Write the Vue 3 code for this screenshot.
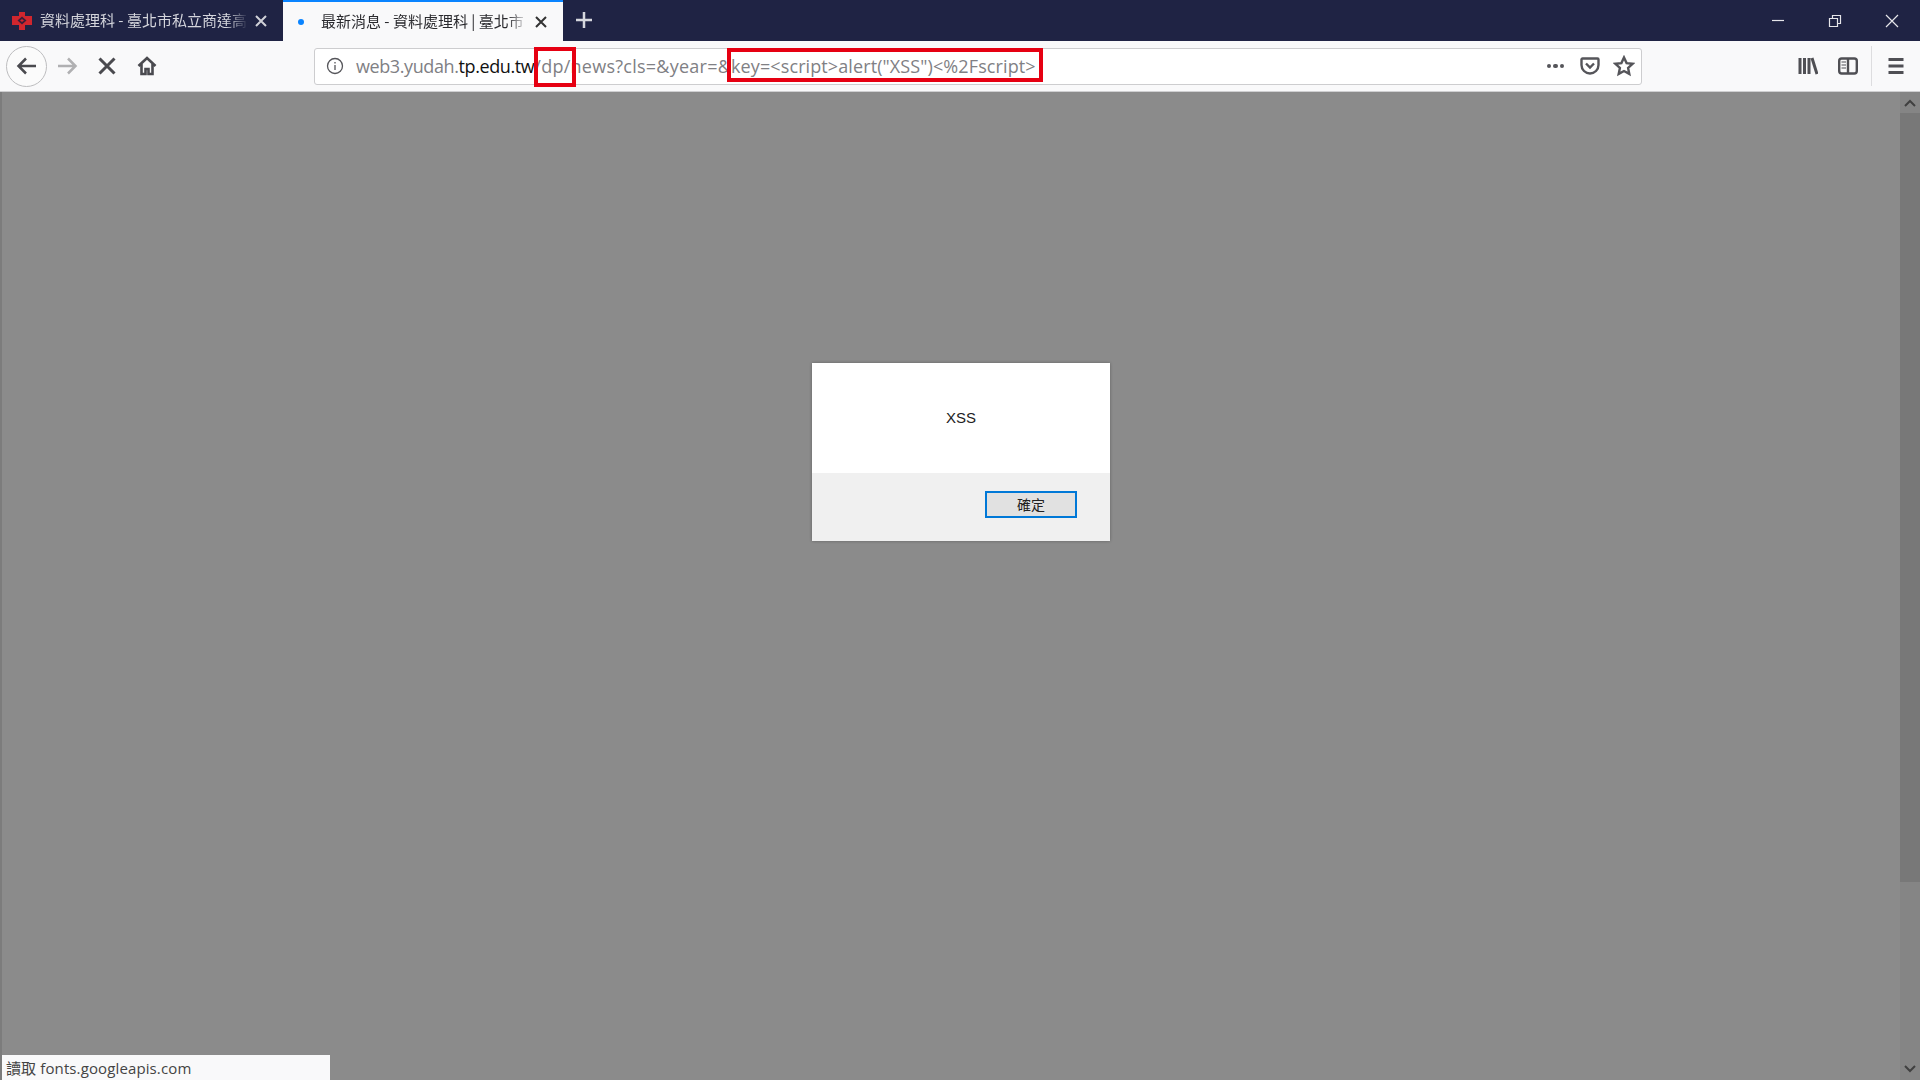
<template>
  <div class="window">
    <div class="tabbar">
      <div class="tab">
        <svg class="favicon" width="20" height="18" viewBox="0 0 20 18">
          <path class="red" d="M7 0h6v4h7v9h-7v5H7v-5H0V4h7z" />
          <path class="hole" d="M10 4.500L14.500 8.500 10 12.500 5.500 8.500z" />
          <path class="red" d="M10 7L12 8.500 10 10 8 8.500z" />
        </svg>
        <span class="tab-title">資料處理科 - 臺北市私立商達高</span>
        <svg class="tab-close" width="14" height="14" viewBox="0 0 14 14"><path d="M2 2l10 10M12 2L2 12" /></svg>
      </div>
      <div class="tab active">
        <span class="dot"></span>
        <span class="tab-title">最新消息 - 資料處理科 | 臺北市</span>
        <svg class="tab-close" width="14" height="14" viewBox="0 0 14 14"><path d="M2 2l10 10M12 2L2 12" /></svg>
      </div>
      <svg class="plus" width="18" height="18" viewBox="0 0 18 18"><path d="M9 1v16M1 9h16" /></svg>
      <div class="win-btns">
        <svg width="14" height="14" viewBox="0 0 14 14"><path d="M1 6.500h12" /></svg>
        <svg width="14" height="14" viewBox="0 0 14 14"><path d="M1.500 4.500h8v8h-8zM4.500 4.500v-3h8v8h-3" /></svg>
        <svg width="14" height="14" viewBox="0 0 14 14"><path d="M1 1l12 12M13 1L1 13" /></svg>
      </div>
    </div>

    <div class="toolbar">
      <button class="back">
        <svg width="22" height="22" viewBox="0 0 22 22"><path d="M20 11H3M10 3.500L2.500 11l7.500 7.500" /></svg>
      </button>
      <svg class="nav forward" width="22" height="22" viewBox="0 0 22 22"><path d="M2 11h17M12 3.500l7.500 7.500-7.500 7.500" /></svg>
      <svg class="nav stop" width="20" height="20" viewBox="0 0 20 20"><path d="M2.500 2.500l15 15M17.500 2.500l-15 15" /></svg>
      <svg class="nav home" width="20" height="20" viewBox="0 0 20 20"><path d="M1.500 10L10 2l8.500 8M4.500 8v10h4v-5h3v5h4V8" /></svg>

      <div class="urlbar">
        <svg class="info" width="18" height="18" viewBox="0 0 18 18">
          <circle cx="9" cy="9" r="7.500" />
          <path d="M9 8v5M9 5v1.500" />
        </svg>
        <div class="url"><span class="host">web3.yudah.<b>tp.edu.tw</b></span><span class="path">/dp/news?cls=&amp;year=&amp;</span><span class="query">key=&lt;script&gt;alert("XSS")&lt;%2Fscript&gt;</span></div>
        <div class="url-actions">
          <span class="dots"><i></i><i></i><i></i></span>
          <svg width="20" height="20" viewBox="0 0 20 20"><path d="M2.500 2.500h15a1 1 0 0 1 1 1V9a8.500 8.500 0 0 1-17 0V3.500a1 1 0 0 1 1-1zM6 7.500l4 4 4-4" /></svg>
          <svg width="22" height="22" viewBox="0 0 22 22"><path d="M11 2.500l2.600 5.600 6 .7-4.500 4.100 1.200 6L11 16l-5.300 2.900 1.200-6-4.500-4.100 6-.7z" /></svg>
        </div>
      </div>

      <div class="tools">
        <svg class="library" width="20" height="20" viewBox="0 0 20 20"><path d="M2 2v16M6.500 2v16M11 2v16M14 2l5 16" /></svg>
        <svg class="sidebar" width="20" height="20" viewBox="0 0 20 20"><rect x="1.200" y="2.500" width="17.600" height="15" rx="2.500" /><path d="M10 2.500v15" /><path class="thin" d="M3.500 6H8M3.500 9H8M3.500 12H8" /></svg>
        <span class="divider"></span>
        <svg class="burger" width="20" height="20" viewBox="0 0 20 20"><path d="M2.500 3.500h15M2.500 10h15M2.500 16.500h15" /></svg>
      </div>
    </div>

    <div class="page">
      <div class="dialog">
        <div class="dialog-body">XSS</div>
        <div class="dialog-foot"><button class="ok">確定</button></div>
      </div>

      <div class="scrollbar">
        <svg width="14" height="10" viewBox="0 0 14 10"><path d="M2 8l5-5 5 5" /></svg>
        <div class="track"><div class="thumb"></div></div>
        <svg width="14" height="10" viewBox="0 0 14 10"><path d="M2 2l5 5 5-5" /></svg>
      </div>

      <div class="status">讀取 fonts.googleapis.com</div>
    </div>

    <!-- annotation boxes drawn over the screenshot -->
    <div class="mark mark-dp"></div>
    <div class="mark mark-key"></div>
  </div>
</template>

<script setup>
</script>

<style>
html, body {
  margin: 0;
  background: #8b8b8b;
}
</style>

<style scoped>
.window {
  position: relative;
  width: 1920px;
  height: 1080px;
  overflow: hidden;
  display: flex;
  flex-direction: column;
  font-family: "Open Sans", "Noto Sans CJK TC", sans-serif;
}
svg {
  fill: none;
  stroke-width: 2;
  flex: none;
}

/* tabs */
.tabbar {
  height: 41px;
  background: #1f2344;
  display: flex;
  align-items: stretch;
  flex: none;
}
.tab {
  width: 271px;
  margin-left: 12px;
  display: flex;
  align-items: center;
  color: #d4d5dc;
  font-size: 15px;
  font-family: "Noto Sans CJK TC", sans-serif;
}
.favicon {
  margin-right: 8px;
}
.favicon .red {
  fill: #d0262e;
}
.favicon .hole {
  fill: #3a1f3a;
}
.tab-title {
  flex: 1;
  min-width: 0;
  white-space: nowrap;
  padding-bottom: 2px;
  -webkit-mask-image: linear-gradient(to right, #000 90%, transparent 100%);
  mask-image: linear-gradient(to right, #000 90%, transparent 100%);
}
.tab-close {
  stroke: #d0d1d8;
  margin: 0 15px 0 6px;
}
.tab.active {
  margin-left: 0;
  width: 280px;
  background: #f9f9fa;
  border-top: 2px solid #0a84ff;
  box-sizing: border-box;
  color: #2a2a2e;
  padding-left: 15px;
}
.tab.active .tab-close {
  stroke: #333;
}
.dot {
  width: 6px;
  height: 6px;
  border-radius: 50%;
  background: #0a84ff;
  margin-right: 17px;
  flex: none;
}
.plus {
  stroke: #d6d7de;
  stroke-width: 2.500;
  margin: 11px 0 0 12px;
}
.win-btns {
  margin-left: auto;
  width: 149px;
  display: flex;
  align-items: center;
  justify-content: space-between;
  padding-right: 21px;
  box-sizing: border-box;
}
.win-btns svg {
  stroke: #e6e6ea;
  stroke-width: 1.200;
}

/* toolbar */
.toolbar {
  height: 51px;
  flex: none;
  box-sizing: border-box;
  background: #f9f9fa;
  border-bottom: 1px solid #cfcfd1;
  display: flex;
  align-items: center;
  padding-left: 6px;
}
.back {
  width: 41px;
  height: 41px;
  border-radius: 50%;
  border: 1px solid #bdbdbf;
  background: #fbfbfb;
  padding: 0;
  display: flex;
  align-items: center;
  justify-content: center;
}
.back svg {
  stroke: #4a4a4f;
  stroke-width: 2.500;
}
.nav {
  stroke: #4a4a4f;
}
.forward {
  stroke: #b0b0b2;
  stroke-width: 2.500;
  margin-left: 9px;
}
.stop {
  margin-left: 19px;
  stroke-width: 3;
}
.home {
  margin-left: 20px;
  stroke-width: 2.600;
}
.urlbar {
  margin-left: 157px;
  width: 1328px;
  height: 37px;
  flex: none;
  box-sizing: border-box;
  background: #fff;
  border: 1px solid #cdcdcf;
  border-radius: 3px;
  display: flex;
  align-items: center;
}
.info {
  stroke: #55555a;
  stroke-width: 1.300;
  margin-left: 11px;
}
.url {
  margin-left: 12px;
  font-size: 18px;
  color: #808084;
  white-space: nowrap;
}
.host {
  letter-spacing: -0.4px;
}
.path {
  letter-spacing: 0.25px;
}
.query {
  letter-spacing: 0.1px;
}
.url b {
  font-weight: 400;
  color: #111;
}
.url-actions {
  margin-left: auto;
  display: flex;
  align-items: center;
  padding-right: 6px;
}
.url-actions svg {
  stroke: #55555a;
  stroke-width: 2.400;
}
.url-actions svg:nth-child(2) {
  margin-left: 16px;
}
.url-actions svg:nth-child(3) {
  margin-left: 13px;
}
.dots {
  display: flex;
  gap: 2px;
}
.dots i {
  width: 4.500px;
  height: 4.500px;
  border-radius: 50%;
  background: #55555a;
}
.tools {
  margin-left: auto;
  display: flex;
  align-items: center;
  padding-right: 14px;
}
.tools svg {
  stroke: #4f4f54;
}
.library {
  stroke-width: 3;
  margin-right: 20px;
}
.sidebar {
  stroke-width: 2.400;
}
.sidebar .thin {
  stroke-width: 1.200;
}
.burger {
  stroke-width: 3;
}
.divider {
  width: 1px;
  height: 40px;
  background: #dddddf;
  margin: 0 14px 0 13px;
}

/* page behind the alert overlay */
.page {
  position: relative;
  flex: 1;
  background: #8b8b8b;
  border-left: 2px solid #7c7c7c;
}
.dialog {
  position: absolute;
  left: 810px;
  top: 271px;
  width: 298px;
  height: 178px;
  display: flex;
  flex-direction: column;
  box-shadow: 0 0 3px rgba(0, 0, 0, 0.3);
}
.dialog-body {
  height: 110px;
  padding-bottom: 2px;
  box-sizing: border-box;
  background: #fff;
  display: flex;
  align-items: center;
  justify-content: center;
  font: 15px "Liberation Sans", sans-serif;
  color: #222;
}
.dialog-foot {
  flex: 1;
  background: #f0f0f0;
  display: flex;
  justify-content: flex-end;
  padding: 18px 33px 0 0;
}
.ok {
  width: 92px;
  height: 27px;
  box-sizing: border-box;
  border: 2px solid #0078d7;
  background: #e1e1e1;
  padding: 0 0 2px;
  font: 14px "Noto Sans CJK TC", sans-serif;
  color: #222;
}
.scrollbar {
  position: absolute;
  right: 0;
  top: 0;
  bottom: 0;
  width: 20px;
  background: #858585;
  display: flex;
  flex-direction: column;
  align-items: center;
  justify-content: space-between;
  padding: 6px 0;
  box-sizing: border-box;
}
.scrollbar svg {
  stroke: #404040;
}
.track {
  flex: 1;
  width: 100%;
  padding-top: 5px;
  box-sizing: border-box;
}
.thumb {
  height: 769px;
  background: #787878;
}
.status {
  position: absolute;
  left: 0;
  bottom: 0;
  width: 328px;
  height: 25px;
  line-height: 26px;
  box-sizing: border-box;
  padding-left: 4px;
  background: #f9f9fa;
  font-size: 15px;
  letter-spacing: 0.12px;
  color: #444;
  white-space: nowrap;
}

/* red boxes */
.mark {
  position: absolute;
  border: 4px solid #e60012;
  box-sizing: border-box;
}
.mark-dp {
  left: 534px;
  top: 47px;
  width: 42px;
  height: 40px;
}
.mark-key {
  left: 727px;
  top: 48px;
  width: 316px;
  height: 34px;
}
</style>
